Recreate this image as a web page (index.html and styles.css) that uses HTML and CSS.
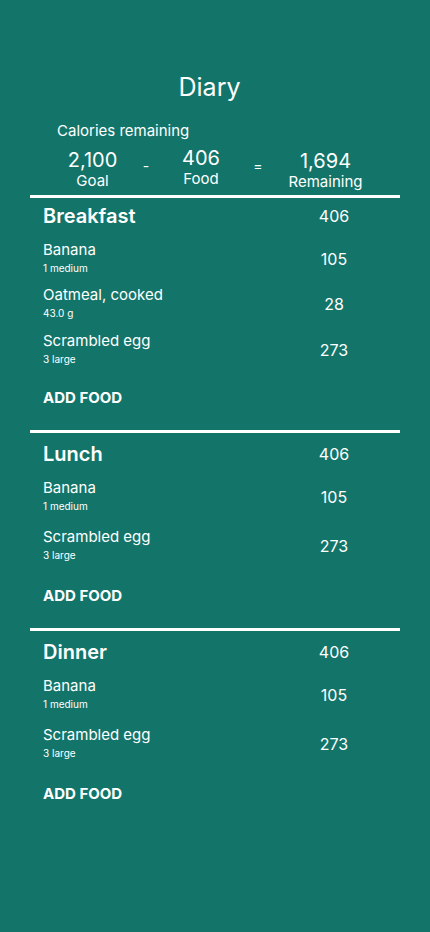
FILE: index.html
```html
<!DOCTYPE html>
<html lang="en">
<head>
<meta charset="utf-8">
<title>Diary</title>
<link rel="stylesheet" href="styles.css">
</head>
<body>
<main class="page">
  <h1 class="title">Diary</h1>
  <p class="cal-label">Calories remaining</p>
  <div class="totals">
    <div class="total">
      <span class="total-num">2,100</span>
      <span class="total-label">Goal</span>
    </div>
    <span class="op">-</span>
    <div class="total total--up">
      <span class="total-num">406</span>
      <span class="total-label">Food</span>
    </div>
    <span class="op">=</span>
    <div class="total total--down">
      <span class="total-num">1,694</span>
      <span class="total-label">Remaining</span>
    </div>
  </div>
  <div class="divider"></div>

  <section class="meal meal--first">
    <div class="meal-head">
      <h2 class="meal-name">Breakfast</h2>
      <span class="kcal">406</span>
    </div>
    <ul class="items">
      <li class="item">
        <div class="item-info"><span class="item-name">Banana</span><span class="item-qty">1 medium</span></div>
        <span class="kcal">105</span>
      </li>
      <li class="item">
        <div class="item-info"><span class="item-name">Oatmeal, cooked</span><span class="item-qty">43.0 g</span></div>
        <span class="kcal">28</span>
      </li>
      <li class="item">
        <div class="item-info"><span class="item-name">Scrambled egg</span><span class="item-qty">3 large</span></div>
        <span class="kcal">273</span>
      </li>
    </ul>
    <button class="add">ADD FOOD</button>
  </section>
  <div class="divider"></div>

  <section class="meal">
    <div class="meal-head">
      <h2 class="meal-name">Lunch</h2>
      <span class="kcal">406</span>
    </div>
    <ul class="items">
      <li class="item">
        <div class="item-info"><span class="item-name">Banana</span><span class="item-qty">1 medium</span></div>
        <span class="kcal">105</span>
      </li>
      <li class="item">
        <div class="item-info"><span class="item-name">Scrambled egg</span><span class="item-qty">3 large</span></div>
        <span class="kcal">273</span>
      </li>
    </ul>
    <button class="add">ADD FOOD</button>
  </section>
  <div class="divider"></div>

  <section class="meal">
    <div class="meal-head">
      <h2 class="meal-name">Dinner</h2>
      <span class="kcal">406</span>
    </div>
    <ul class="items">
      <li class="item">
        <div class="item-info"><span class="item-name">Banana</span><span class="item-qty">1 medium</span></div>
        <span class="kcal">105</span>
      </li>
      <li class="item">
        <div class="item-info"><span class="item-name">Scrambled egg</span><span class="item-qty">3 large</span></div>
        <span class="kcal">273</span>
      </li>
    </ul>
    <button class="add">ADD FOOD</button>
  </section>
</main>
</body>
</html>
```

FILE: styles.css
```css
* { box-sizing: border-box; }

html, body {
  margin: 0;
  padding: 0;
  background: #13756a;
  min-height: 100%;
}

body {
  font-family: Inter, "Noto Sans", sans-serif;
  color: #ffffff;
  min-height: 932px;
}

.page {
  padding-top: 72px;
  display: flex;
  flex-direction: column;
}

.title {
  margin: 0 0 0 57px;
  width: 305px;
  text-align: center;
  font-size: 25px;
  line-height: 30px;
  font-weight: 400;
}

.cal-label {
  margin: 20px 0 0 57px;
  font-size: 15px;
  line-height: 18px;
}

.totals {
  margin: 8px 0 0 57px;
  display: grid;
  grid-template-columns: 71px 36px 74px 40px 95px;
  align-items: start;
}

.total {
  display: flex;
  flex-direction: column;
  align-items: center;
}

.total--up { margin-top: -2px; }
.total--down { margin-top: 1px; }

.total-num {
  font-size: 20px;
  line-height: 24px;
}

.total-label {
  font-size: 15px;
  line-height: 18px;
}

.op {
  padding-top: 9px;
  text-align: center;
  font-size: 14px;
  line-height: 17px;
}

.divider {
  margin: 4px 30px 0;
  height: 3px;
  background: #ffffff;
}

.meal + .divider { margin-top: 0; }

.meal {
  display: flex;
  flex-direction: column;
  padding: 9px 66px 23.5px 43px;
}

.meal--first { padding-top: 6px; }

.meal-head {
  display: flex;
  align-items: center;
}

.meal-name {
  flex: 1;
  margin: 0;
  font-size: 20px;
  line-height: 24px;
  font-weight: 600;
}

.kcal {
  width: 60px;
  text-align: center;
  font-size: 16px;
  line-height: 19px;
}

.items {
  list-style: none;
  margin: 12.5px 0 0;
  padding: 0;
  display: flex;
  flex-direction: column;
  gap: 15px;
}

.meal--first .items { gap: 11.5px; }

.item {
  display: flex;
  align-items: center;
}

.item .kcal { padding-top: 3px; }

.item-info {
  flex: 1;
  display: flex;
  flex-direction: column;
  gap: 3px;
}

.item-name {
  font-size: 15px;
  line-height: 18px;
}

.item-qty {
  font-size: 10px;
  line-height: 13px;
}

.add {
  align-self: flex-start;
  margin: 25px 0 0;
  padding: 0;
  border: 0;
  background: none;
  color: #ffffff;
  font-family: inherit;
  font-size: 15px;
  line-height: 18px;
  font-weight: 700;
}

.meal--first .add { margin-top: 23px; }
```
